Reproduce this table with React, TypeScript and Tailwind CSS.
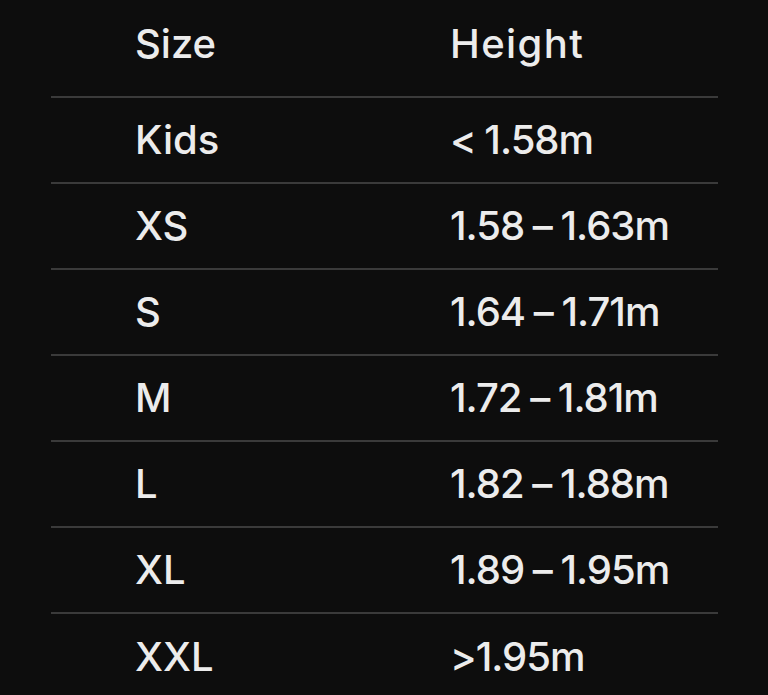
const rows: { size: string; height: string }[] = [
  { size: "Kids", height: "< 1.58m" },
  { size: "XS", height: "1.58 – 1.63m" },
  { size: "S", height: "1.64 – 1.71m" },
  { size: "M", height: "1.72 – 1.81m" },
  { size: "L", height: "1.82 – 1.88m" },
  { size: "XL", height: "1.89 – 1.95m" },
  { size: "XXL", height: ">1.95m" },
]

const App = () => {
  return (
    <div className="h-[695px] w-[768px] overflow-hidden bg-[#0d0d0d] font-['Inter',sans-serif] text-[40px] font-medium text-[#ececec]">
      <div className="ml-[51px] w-[667px]">
        <div className="flex h-[98px] items-center pb-[8px] border-b-2 border-[#3a3a3a]">
          <div className="w-[399px] pl-[84px]">Size</div>
          <div className="tracking-[0.035em]">Height</div>
        </div>
        {rows.map((row, i) => (
          <div
            key={row.size}
            className={
              i < rows.length - 1
                ? "flex h-[86px] items-center border-b-2 border-[#3a3a3a]"
                : "flex h-[86px] items-center"
            }
          >
            <div className="w-[399px] pl-[84px]">{row.size}</div>
            <div className="tracking-[-0.025em] [word-spacing:-1px]">{row.height}</div>
          </div>
        ))}
      </div>
    </div>
  )
}

export default App
